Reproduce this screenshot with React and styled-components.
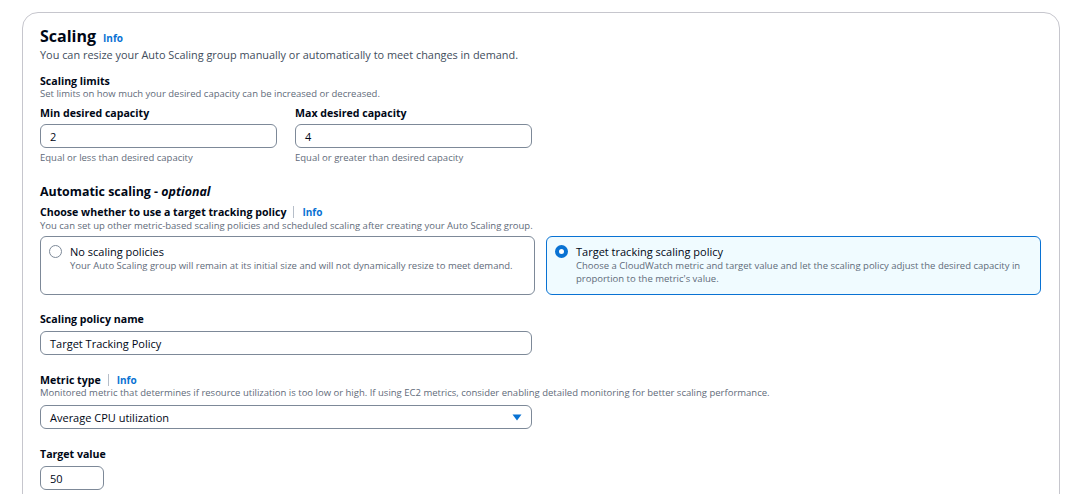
import React from 'react';
import styled, { createGlobalStyle } from 'styled-components';

const GlobalStyle = createGlobalStyle`
  html, body { margin: 0; padding: 0; background: #ffffff; }
  body { font-family: "Open Sans", "Noto Sans", sans-serif; color: #000716; }
`;

const Page = styled.div`
  padding: 12px 21px 0 22px;
  height: 494px;
  overflow: hidden;
  box-sizing: border-box;
`;

const Card = styled.section`
  border: 1px solid #c6c6cd;
  border-radius: 16px;
  padding: 12px 17px 40px 17px;
`;

const HeaderRow = styled.div`
  display: flex;
  align-items: baseline;
  gap: 7px;
  height: 22px;
`;

const Title = styled.h2`
  margin: 0;
  font-size: 16px;
  line-height: 22px;
  font-weight: 700;
`;

const InfoLink = styled.a`
  color: #0972d3;
  font-size: 10px;
  font-weight: 700;
  text-decoration: none;
`;

const Desc = styled.p`
  margin: 0;
  font-size: 10.9px;
  line-height: 16px;
  color: #414d5c;
`;

const SubTitle = styled.div`
  margin-top: ${p => p.$top || 0}px;
  font-size: 10.6px;
  line-height: 14px;
  font-weight: 700;
  display: flex;
  align-items: center;
`;

const SectionTitle = styled.div`
  margin-top: 19px;
  font-size: 12.4px;
  line-height: 18px;
  font-weight: 700;
  em { font-style: italic; }
`;

const Hint = styled.div`
  margin-top: ${p => p.$top || 0}px;
  font-size: 9.5px;
  line-height: 12px;
  color: #5f6b7a;
`;

const Sep = styled.span`
  display: inline-block;
  width: 1px;
  height: 12px;
  background: #b6bec9;
  margin: 0 8px 0 7px;
`;

const InlineInfo = styled.span`
  color: #0972d3;
  font-size: 10px;
  font-weight: 700;
`;

const LimitsRow = styled.div`
  display: grid;
  grid-template-columns: 237px 237px;
  column-gap: 18px;
  margin-top: 6px;
`;

const Field = styled.div`
  display: flex;
  flex-direction: column;
`;

const Input = styled.div`
  box-sizing: border-box;
  width: ${p => p.$w || 492}px;
  height: 24px;
  margin-top: ${p => p.$top || 4}px;
  border: 1px solid #7d8998;
  border-radius: 6px;
  padding: 0 9px;
  display: flex;
  align-items: center;
  justify-content: space-between;
  font-size: 11px;
  color: #000716;
`;

const Tiles = styled.div`
  display: grid;
  grid-template-columns: 495px 495px;
  column-gap: 11px;
  margin-top: 4px;
`;

const Tile = styled.div`
  box-sizing: border-box;
  height: 59px;
  border: 1px solid ${p => (p.$on ? '#0972d3' : '#7d8998')};
  background: ${p => (p.$on ? '#f0fbff' : '#ffffff')};
  border-radius: 6px;
  padding: 7px 14px 0 8px;
  display: flex;
  gap: 8px;
  align-items: flex-start;
`;

const Radio = styled.span`
  flex: none;
  box-sizing: border-box;
  width: 13px;
  height: 13px;
  margin-top: 1px;
  border-radius: 50%;
  border: ${p => (p.$on ? '4px solid #0972d3' : '1.5px solid #7d8998')};
  background: #fff;
`;

const TileText = styled.div`
  display: flex;
  flex-direction: column;
`;

const TileTitle = styled.div`
  font-size: 11px;
  line-height: 15px;
  color: #000716;
`;

const TileDesc = styled.div`
  font-size: 9.5px;
  line-height: 13px;
  color: #5f6b7a;
`;

const Caret = () => (
  <svg width="10" height="7" viewBox="0 0 10 7">
    <path d="M0.5 0.5 L9.5 0.5 L5 6.5 Z" fill="#0972d3" />
  </svg>
);

export default function App() {
  return (
    <>
      <GlobalStyle />
      <Page>
        <Card>
          <HeaderRow>
            <Title>Scaling</Title>
            <InfoLink>Info</InfoLink>
          </HeaderRow>
          <Desc>You can resize your Auto Scaling group manually or automatically to meet changes in demand.</Desc>

          <SubTitle $top={11}>Scaling limits</SubTitle>
          <Hint>Set limits on how much your desired capacity can be increased or decreased.</Hint>

          <LimitsRow>
            <Field>
              <SubTitle>Min desired capacity</SubTitle>
              <Input $w={237}>2</Input>
              <Hint $top={4}>Equal or less than desired capacity</Hint>
            </Field>
            <Field>
              <SubTitle>Max desired capacity</SubTitle>
              <Input $w={237}>4</Input>
              <Hint $top={4}>Equal or greater than desired capacity</Hint>
            </Field>
          </LimitsRow>

          <SectionTitle>Automatic scaling - <em>optional</em></SectionTitle>
          <SubTitle $top={4}>
            Choose whether to use a target tracking policy<Sep /><InlineInfo>Info</InlineInfo>
          </SubTitle>
          <Hint $top={1}>You can set up other metric-based scaling policies and scheduled scaling after creating your Auto Scaling group.</Hint>

          <Tiles>
            <Tile>
              <Radio />
              <TileText>
                <TileTitle>No scaling policies</TileTitle>
                <TileDesc>Your Auto Scaling group will remain at its initial size and will not dynamically resize to meet demand.</TileDesc>
              </TileText>
            </Tile>
            <Tile $on>
              <Radio $on />
              <TileText>
                <TileTitle>Target tracking scaling policy</TileTitle>
                <TileDesc>Choose a CloudWatch metric and target value and let the scaling policy adjust the desired capacity in proportion to the metric's value.</TileDesc>
              </TileText>
            </Tile>
          </Tiles>

          <SubTitle $top={17}>Scaling policy name</SubTitle>
          <Input $top={5}>Target Tracking Policy</Input>

          <SubTitle $top={18}>
            Metric type<Sep /><InlineInfo>Info</InlineInfo>
          </SubTitle>
          <Hint>Monitored metric that determines if resource utilization is too low or high. If using EC2 metrics, consider enabling detailed monitoring for better scaling performance.</Hint>
          <Input $top={6}>
            Average CPU utilization
            <Caret />
          </Input>

          <SubTitle $top={18}>Target value</SubTitle>
          <Input $top={5} $w={64}>50</Input>
        </Card>
      </Page>
    </>
  );
}
